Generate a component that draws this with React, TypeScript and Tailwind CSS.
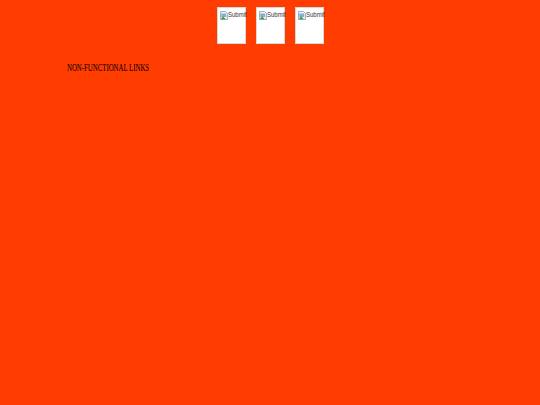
function BrokenImage() {
  return (
    <svg width="8" height="9" viewBox="0 0 8 9" className="shrink-0">
      <path d="M0.5 0.5h5l2 2v6h-7z" fill="#f3f3f3" stroke="#9a9a9a" strokeWidth="0.8" />
      <rect x="1.2" y="2.5" width="5" height="3.5" fill="#7ab3de" />
      <path d="M0.8 8.2l2.2-3 2.8 3z" fill="#3f9f3f" />
    </svg>
  )
}

function SubmitBox() {
  return (
    <div className="h-[37px] w-[29px] border border-[#d9d9d9] bg-white pl-[2px] pt-[3px]">
      <div className="flex items-start">
        <BrokenImage />
        <span className="origin-left scale-x-[0.75] whitespace-nowrap text-[8px] leading-[8px] text-[#333] [font-family:'Liberation_Sans',Arial,sans-serif]">
          Submit
        </span>
      </div>
    </div>
  )
}

export default function App() {
  return (
    <div className="min-h-[405px] w-full bg-[#ff3d00]">
      <div className="flex justify-center gap-[10px] pt-[7px]">
        <SubmitBox />
        <SubmitBox />
        <SubmitBox />
      </div>
      <div className="flex pl-[67px] pt-[17px]">
        <span className="inline-block origin-left scale-x-[0.62] whitespace-nowrap text-[11px] leading-[12px] text-black [font-family:'Liberation_Serif','Times_New_Roman',serif]">
          NON-FUNCTIONAL LINKS
        </span>
      </div>
    </div>
  )
}
